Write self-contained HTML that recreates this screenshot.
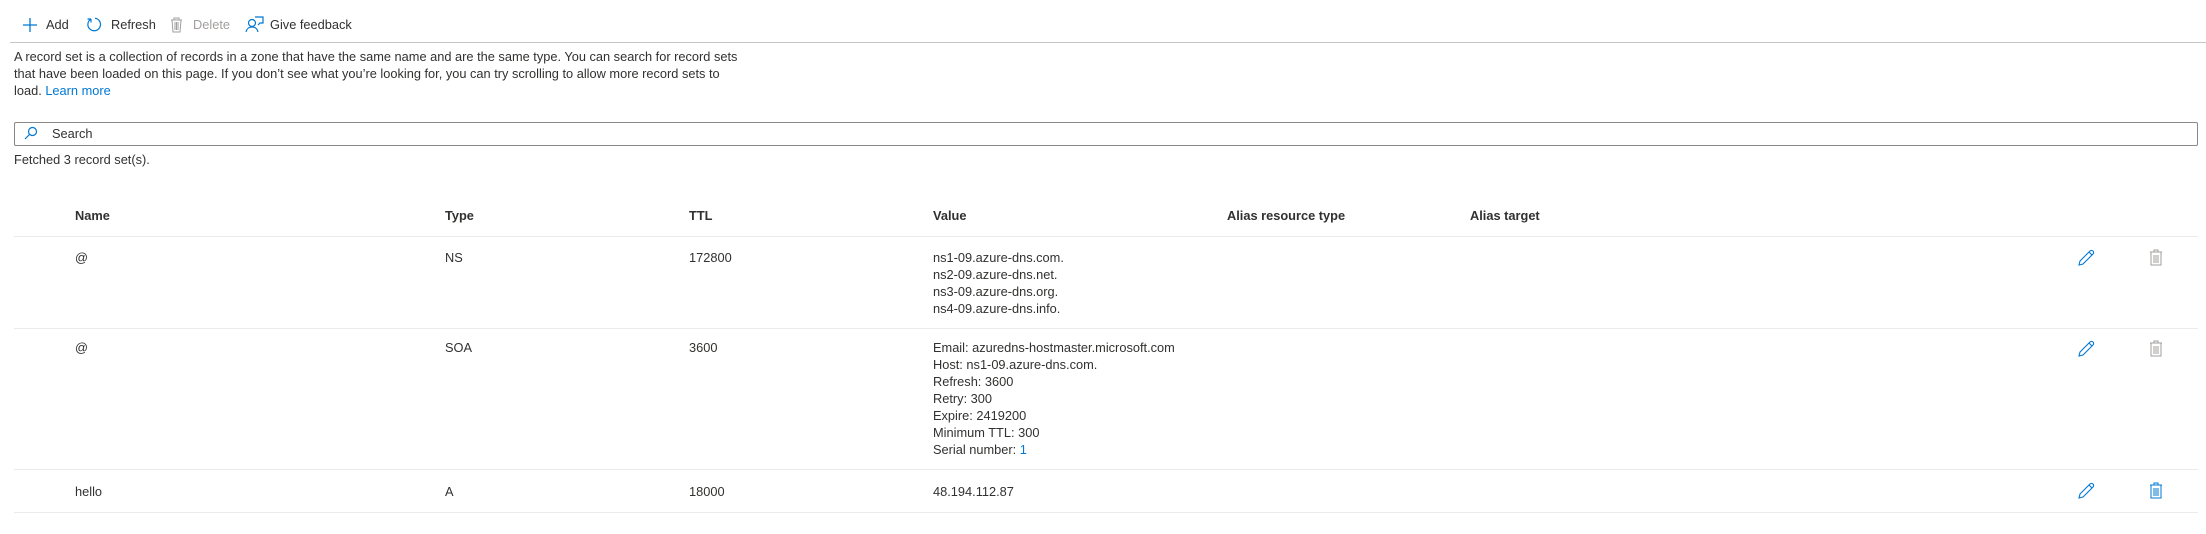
<!DOCTYPE html>
<html><head><meta charset="utf-8"><style>
body{margin:0;width:2206px;height:534px;background:#fff;font-family:"Liberation Sans",Arial,sans-serif;font-size:12.8px;color:#323130;position:relative;overflow:hidden}
.a{position:absolute;white-space:nowrap}
.hl{position:absolute;left:14px;width:2184px;height:1px;background:#edebe9}
.h{font-weight:bold;color:#323130}
.v{line-height:17px}
</style></head><body>
<svg class="a" style="left:22px;top:17px" width="16" height="16" viewBox="0 0 16 16"><path d="M8 1v14M1 8h14" stroke="#0078d4" stroke-width="1.3" fill="none"/></svg>
<div class="a" style="left:46px;top:17px">Add</div>
<svg class="a" style="left:86px;top:16px" width="17" height="17" viewBox="0 0 17 17"><path d="M5 3A6.3 6.3 0 1 0 9 2.2M5 3v3.5M5 3H1.5" stroke="#0078d4" stroke-width="1.2" fill="none"/></svg>
<div class="a" style="left:111px;top:17px">Refresh</div>
<svg class="a" style="left:169px;top:16px" width="15" height="17" viewBox="0 0 15 17"><path d="M2 4h11M5 4V2h5v2M3 4l1 12h7l1-12M6 6v8M7.5 6v8M9 6v8" stroke="#a19f9d" stroke-width="1" fill="none"/></svg>
<div class="a" style="left:193px;top:17px;color:#a19f9d">Delete</div>
<svg class="a" style="left:245px;top:15px" width="19" height="19" viewBox="0 0 19 19"><circle cx="7" cy="8" r="3.5" stroke="#0078d4" stroke-width="1.2" fill="none"/><path d="M1 17c1-4 3-5 6-5s5 1 6 5M10 2h8v6h-3l-2 2" stroke="#0078d4" stroke-width="1.2" fill="none"/></svg>
<div class="a" style="left:270px;top:17px">Give feedback</div>
<div class="hl" style="top:42px;left:10px;width:2196px;background:#c8c6c4"></div>
<div class="a v" style="left:14px;top:48px">A record set is a collection of records in a zone that have the same name and are the same type. You can search for record sets<br>that have been loaded on this page. If you don’t see what you’re looking for, you can try scrolling to allow more record sets to<br>load. <span style="color:#0078d4">Learn more</span></div>
<div class="a" style="left:14px;top:122px;width:2182px;height:22px;border:1px solid #8a8886;border-radius:2px"></div>
<svg class="a" style="left:24px;top:126px" width="14" height="14" viewBox="0 0 14 14"><circle cx="8.5" cy="5.5" r="4" stroke="#0078d4" stroke-width="1.2" fill="none"/><path d="M5.5 8.5L1 13" stroke="#0078d4" stroke-width="1.2"/></svg>
<div class="a" style="left:52px;top:126px">Search</div>
<div class="a" style="left:14px;top:152px">Fetched 3 record set(s).</div>
<div class="a h" style="left:75px;top:208px">Name</div>
<div class="a h" style="left:445px;top:208px">Type</div>
<div class="a h" style="left:689px;top:208px">TTL</div>
<div class="a h" style="left:933px;top:208px">Value</div>
<div class="a h" style="left:1227px;top:208px">Alias resource type</div>
<div class="a h" style="left:1470px;top:208px">Alias target</div>
<div class="hl" style="top:236px"></div>
<div class="a" style="left:75px;top:250px">@</div><div class="a" style="left:445px;top:250px">NS</div><div class="a" style="left:689px;top:250px">172800</div>
<div class="a v" style="left:933px;top:249px">ns1-09.azure-dns.com.<br>ns2-09.azure-dns.net.<br>ns3-09.azure-dns.org.<br>ns4-09.azure-dns.info.</div>
<div class="hl" style="top:328px"></div>
<div class="a" style="left:75px;top:340px">@</div><div class="a" style="left:445px;top:340px">SOA</div><div class="a" style="left:689px;top:340px">3600</div>
<div class="a v" style="left:933px;top:339px">Email: azuredns-hostmaster.microsoft.com<br>Host: ns1-09.azure-dns.com.<br>Refresh: 3600<br>Retry: 300<br>Expire: 2419200<br>Minimum TTL: 300<br>Serial number: <span style="color:#0078d4">1</span></div>
<div class="hl" style="top:469px"></div>
<div class="a" style="left:75px;top:484px">hello</div><div class="a" style="left:445px;top:484px">A</div><div class="a" style="left:689px;top:484px">18000</div><div class="a" style="left:933px;top:484px">48.194.112.87</div>
<div class="hl" style="top:512px"></div>
<svg width="0" height="0" style="position:absolute"><defs>
<symbol id="pen" viewBox="0 0 17 17"><path d="M1 16l1-4L12 2a2 2 0 0 1 3 3L5 15z M11 3l3 3" stroke="#0078d4" stroke-width="1.1" fill="none"/></symbol>
<symbol id="tr" viewBox="0 0 14 17"><path d="M1 3h12M5 3V1h4v2M2 3v13h10V3M5 6v8M7 6v8M9 6v8" stroke="currentColor" stroke-width="1" fill="none"/></symbol>
</defs></svg>
<svg class="a" style="left:2078px;top:249px" width="17" height="17"><use href="#pen"/></svg>
<svg class="a" style="left:2149px;top:249px;color:#a19f9d" width="14" height="17"><use href="#tr"/></svg>
<svg class="a" style="left:2078px;top:340px" width="17" height="17"><use href="#pen"/></svg>
<svg class="a" style="left:2149px;top:340px;color:#a19f9d" width="14" height="17"><use href="#tr"/></svg>
<svg class="a" style="left:2078px;top:482px" width="17" height="17"><use href="#pen"/></svg>
<svg class="a" style="left:2149px;top:482px;color:#0078d4" width="14" height="17"><use href="#tr"/></svg>
</body></html>
